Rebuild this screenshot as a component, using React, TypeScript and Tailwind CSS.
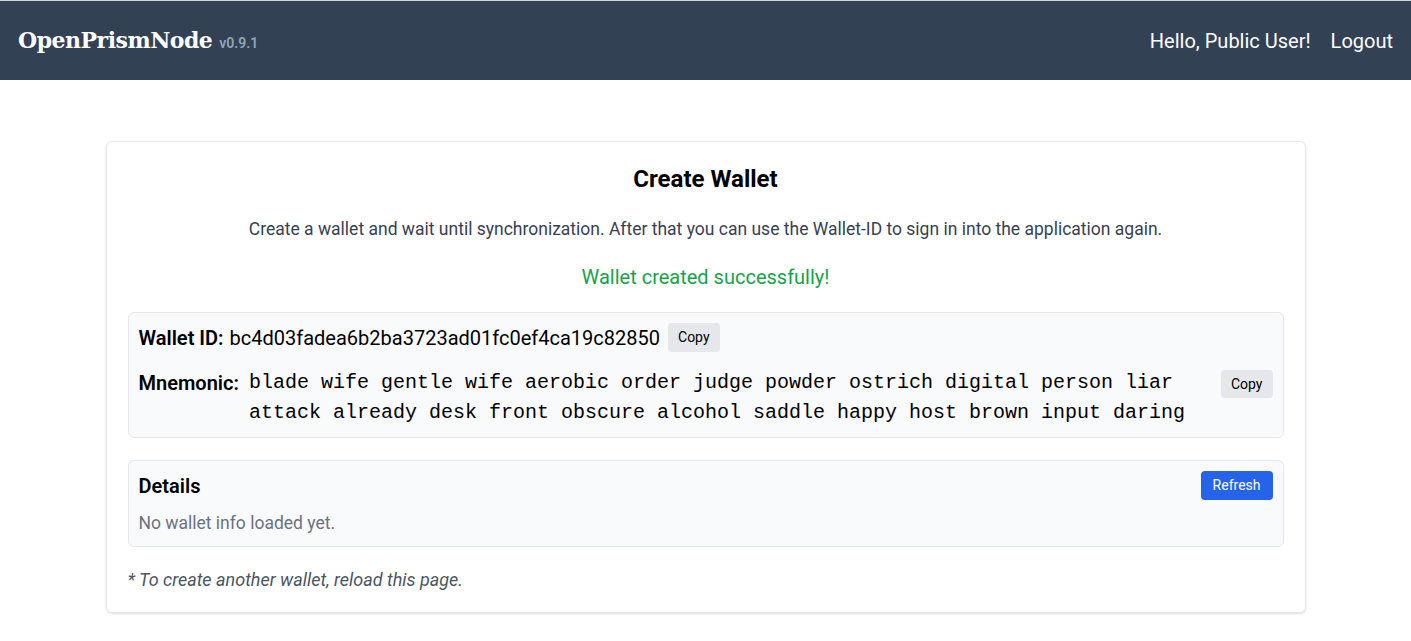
import React from "react";

export default function App() {
  const mnemonic =
    "blade wife gentle wife aerobic order judge powder ostrich digital person liar attack already desk front obscure alcohol saddle happy host brown input daring";
  return (
    <div className="min-h-screen bg-white font-['Roboto',sans-serif] text-black">
      <header className="h-20 border-t border-gray-300 bg-[#334155] flex items-center justify-between px-[18px] text-white">
        <div className="flex items-baseline gap-[7px]">
          <span className="font-['DejaVu_Serif',serif] font-bold text-[22px] tracking-[-0.5px]">OpenPrismNode</span>
          <span className="text-sm font-semibold text-[#94a3b8]">v0.9.1</span>
        </div>
        <div className="flex items-center gap-5 text-xl">
          <span>Hello, Public User!</span>
          <span>Logout</span>
        </div>
      </header>

      <main className="pt-[61px]">
        <div className="mx-auto w-[1200px] rounded-md border border-gray-200 bg-white px-[21px] pt-[21px] pb-[20px] shadow-sm">
          <h1 className="text-center text-2xl leading-8 font-bold">Create Wallet</h1>
          <p className="mt-[22px] text-center text-[17.5px] leading-6 text-[#374151]">
            Create a wallet and wait until synchronization. After that you can use the Wallet-ID to sign in into the application again.
          </p>
          <p className="mt-[22px] text-center text-xl leading-7 text-[#16a34a]">Wallet created successfully!</p>

          <div className="mt-[21px] rounded-md border border-gray-200 bg-[#f9fafb] px-2.5 pt-2.5 pb-[9px]">
            <div className="flex items-center text-xl leading-7">
              <span className="font-semibold">Wallet ID:</span>
              <span className="ml-1.5">bc4d03fadea6b2ba3723ad01fc0ef4ca19c82850</span>
              <button className="ml-2 rounded bg-[#e5e7eb] px-2.5 py-1 text-sm leading-[21px]">Copy</button>
            </div>
            <div className="mt-[16px] flex items-start">
              <span className="text-xl font-semibold leading-[30px]">Mnemonic:</span>
              <span className="ml-2.5 flex-1 font-['Liberation_Mono',monospace] text-[20px] leading-[30px]">{mnemonic}</span>
              <button className="ml-2.5 mt-[2px] rounded bg-[#e5e7eb] px-2.5 py-1 text-sm leading-5">Copy</button>
            </div>
          </div>

          <div className="mt-[22px] rounded-md border border-gray-200 bg-[#f9fafb] px-2.5 pt-2.5 pb-[11px]">
            <div className="flex items-center justify-between">
              <span className="text-xl leading-7 font-semibold">Details</span>
              <button className="rounded bg-[#2563eb] px-3 py-1 text-sm leading-[21px] text-white">Refresh</button>
            </div>
            <p className="mt-[11px] text-[17.5px] leading-6 text-[#6b7280]">No wallet info loaded yet.</p>
          </div>

          <p className="mt-[21px] text-lg leading-6 italic text-[#4b5563]">* To create another wallet, reload this page.</p>
        </div>
      </main>
    </div>
  );
}
